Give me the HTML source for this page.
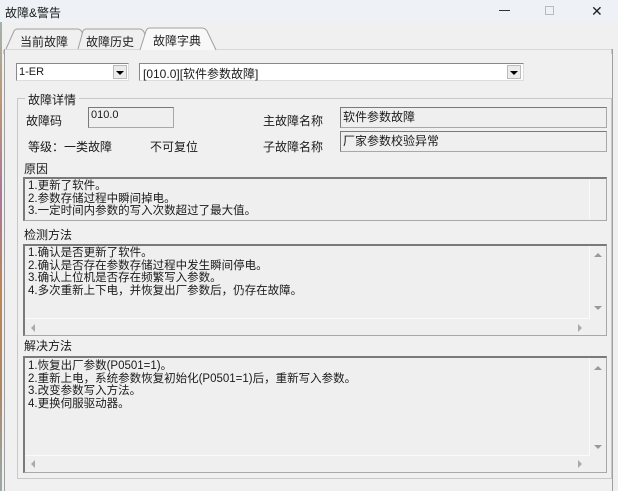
<!DOCTYPE html>
<html><head><meta charset="utf-8">
<style>
*{margin:0;padding:0;box-sizing:border-box}
body{width:618px;height:491px;background:#f0f0f0;position:relative;overflow:hidden;font-family:"Liberation Sans","Noto Sans CJK SC","WenQuanYi Zen Hei",sans-serif;font-size:12px;color:#1a1a1a}
.a{position:absolute}
.title{left:0;top:0;width:618px;height:22px;background:#eef2f7}
.tb{border:1px solid #a8a8a8;border-top:2px solid #7a7a7a;border-left:2px solid #7a7a7a;background:#efefef}
.txt{font-size:11.5px;line-height:12.5px;white-space:pre;padding:3px 0 0 3px}
.tri{width:0;height:0}
</style></head><body>
<div class="a" style="left:0;top:0;width:2px;height:491px;background:linear-gradient(#9bb,#b97,#a79,#b85,#a86,#9aa)"></div>
<div class="a title"></div>
<div class="a" style="left:5px;top:4px;font-size:12px">故障&amp;警告</div>
<div class="a" style="left:499px;top:10px;width:11px;height:1px;background:#333"></div>
<div class="a" style="left:545px;top:6px;width:9px;height:9px;border:1px solid #bbb"></div>
<div class="a" style="left:591px;top:3px;font-size:14px;color:#222">✕</div>

<svg class="a" style="left:0;top:24px" width="618" height="30">
<path d="M4 26 L4 466" stroke="#a0a0a0" fill="none"/>
<path d="M4 25.5 L143 25.5 M216 25.5 L612 25.5" stroke="#d8d8d8"/>
<path d="M612 25 L612 466" stroke="#a0a0a0"/>
<path d="M6 25 L14 7 Q15 5 18 5 L78 5 Q80 5 82 8 L86 25" stroke="#a0a0a0" fill="#f0f0f0"/>
<path d="M78 25 L83 7 Q84 5 87 5 L140 5 Q142 5 144 8 L150 25" stroke="#a0a0a0" fill="#f0f0f0"/>
<path d="M140 26 L146 7 Q147 4 150 4 L202 4 Q205 4 207 7 L216 26" stroke="#a0a0a0" fill="#f8f8f8"/>
<text x="20" y="22" font-size="12" fill="#222" font-family="Liberation Sans,Noto Sans CJK SC,sans-serif">当前故障</text>
<text x="86" y="22" font-size="12" fill="#222" font-family="Liberation Sans,Noto Sans CJK SC,sans-serif">故障历史</text>
<text x="153" y="21" font-size="12" fill="#222" font-family="Liberation Sans,Noto Sans CJK SC,sans-serif">故障字典</text>
</svg>
<div class="a" style="left:4px;top:49px;width:1px;height:442px;background:#a0a0a0"></div>
<div class="a" style="left:612px;top:49px;width:1px;height:442px;background:#a0a0a0"></div>

<div class="a" style="left:16px;top:63px;width:113px;height:18px;background:#fff;border:1px solid #888;border-right-color:#ddd;border-bottom-color:#ddd"></div>
<div class="a" style="left:19px;top:66px;font-size:11px">1-ER</div>
<div class="a" style="left:113px;top:65px;width:14px;height:14px;background:#ececec;border:1px solid #bbb"></div>
<div class="a tri" style="left:116px;top:71px;border-left:4px solid transparent;border-right:4px solid transparent;border-top:4px solid #000"></div>
<div class="a" style="left:139px;top:63px;width:385px;height:18px;background:#fff;border:1px solid #888;border-right-color:#ddd;border-bottom-color:#ddd"></div>
<div class="a" style="left:143px;top:65px;font-size:12px">[010.0][软件参数故障]</div>
<div class="a" style="left:507px;top:65px;width:14px;height:14px;background:#ececec;border:1px solid #bbb"></div>
<div class="a tri" style="left:510px;top:71px;border-left:4px solid transparent;border-right:4px solid transparent;border-top:4px solid #000"></div>

<div class="a" style="left:17px;top:98px;width:595px;height:381px;border:1px solid #c8c8c8"></div>
<div class="a" style="left:25px;top:91px;background:#f0f0f0;padding:0 3px;font-size:12px">故障详情</div>

<div class="a" style="left:26px;top:112px;font-size:12px">故障码</div>
<div class="a tb" style="left:88px;top:107px;width:86px;height:21px;border-top-width:1px;border-left-width:1px"></div>
<div class="a" style="left:91px;top:109px;font-size:11px">010.0</div>
<div class="a" style="left:28px;top:138px">等级：一类故障</div>
<div class="a" style="left:150px;top:138px">不可复位</div>
<div class="a" style="left:263px;top:112px">主故障名称</div>
<div class="a tb" style="left:340px;top:107px;width:267px;height:21px;border-top-width:1px;border-left-width:1px"></div>
<div class="a" style="left:343px;top:108px">软件参数故障</div>
<div class="a" style="left:263px;top:138px">子故障名称</div>
<div class="a tb" style="left:340px;top:131px;width:267px;height:21px;border-top-width:1px;border-left-width:1px"></div>
<div class="a" style="left:343px;top:132px">厂家参数校验异常</div>

<div class="a" style="left:24px;top:160px">原因</div>
<div class="a tb" style="left:23px;top:177px;width:584px;height:44px"></div>
<div class="a" style="left:589px;top:179px;width:1px;height:40px;background:#fafafa"></div>
<div class="a txt" style="left:25px;top:177px">1.更新了软件。
2.参数存储过程中瞬间掉电。
3.一定时间内参数的写入次数超过了最大值。</div>

<div class="a" style="left:24px;top:226px">检测方法</div>
<div class="a tb" style="left:23px;top:244px;width:584px;height:92px"></div>
<div class="a" style="left:589px;top:246px;width:1px;height:72px;background:#fafafa"></div>
<div class="a" style="left:25px;top:318px;width:565px;height:1px;background:#fafafa"></div>
<div class="a tri" style="left:594px;top:253px;border-left:4px solid transparent;border-right:4px solid transparent;border-bottom:4px solid #999"></div>
<div class="a tri" style="left:594px;top:306px;border-left:4px solid transparent;border-right:4px solid transparent;border-top:4px solid #999"></div>
<div class="a tri" style="left:31px;top:324px;border-top:4px solid transparent;border-bottom:4px solid transparent;border-right:4px solid #aaa"></div>
<div class="a tri" style="left:578px;top:324px;border-top:4px solid transparent;border-bottom:4px solid transparent;border-left:4px solid #aaa"></div>
<div class="a txt" style="left:25px;top:244px">1.确认是否更新了软件。
2.确认是否存在参数存储过程中发生瞬间停电。
3.确认上位机是否存在频繁写入参数。
4.多次重新上下电，并恢复出厂参数后，仍存在故障。</div>

<div class="a" style="left:24px;top:337px">解决方法</div>
<div class="a tb" style="left:23px;top:356px;width:584px;height:117px"></div>
<div class="a" style="left:589px;top:358px;width:1px;height:97px;background:#fafafa"></div>
<div class="a" style="left:25px;top:455px;width:565px;height:1px;background:#fafafa"></div>
<div class="a tri" style="left:594px;top:366px;border-left:4px solid transparent;border-right:4px solid transparent;border-bottom:4px solid #999"></div>
<div class="a tri" style="left:594px;top:445px;border-left:4px solid transparent;border-right:4px solid transparent;border-top:4px solid #999"></div>
<div class="a tri" style="left:31px;top:460px;border-top:4px solid transparent;border-bottom:4px solid transparent;border-right:4px solid #aaa"></div>
<div class="a tri" style="left:578px;top:460px;border-top:4px solid transparent;border-bottom:4px solid transparent;border-left:4px solid #aaa"></div>
<div class="a txt" style="left:25px;top:357px">1.恢复出厂参数(P0501=1)。
2.重新上电，系统参数恢复初始化(P0501=1)后，重新写入参数。
3.改变参数写入方法。
4.更换伺服驱动器。</div>
</body></html>
